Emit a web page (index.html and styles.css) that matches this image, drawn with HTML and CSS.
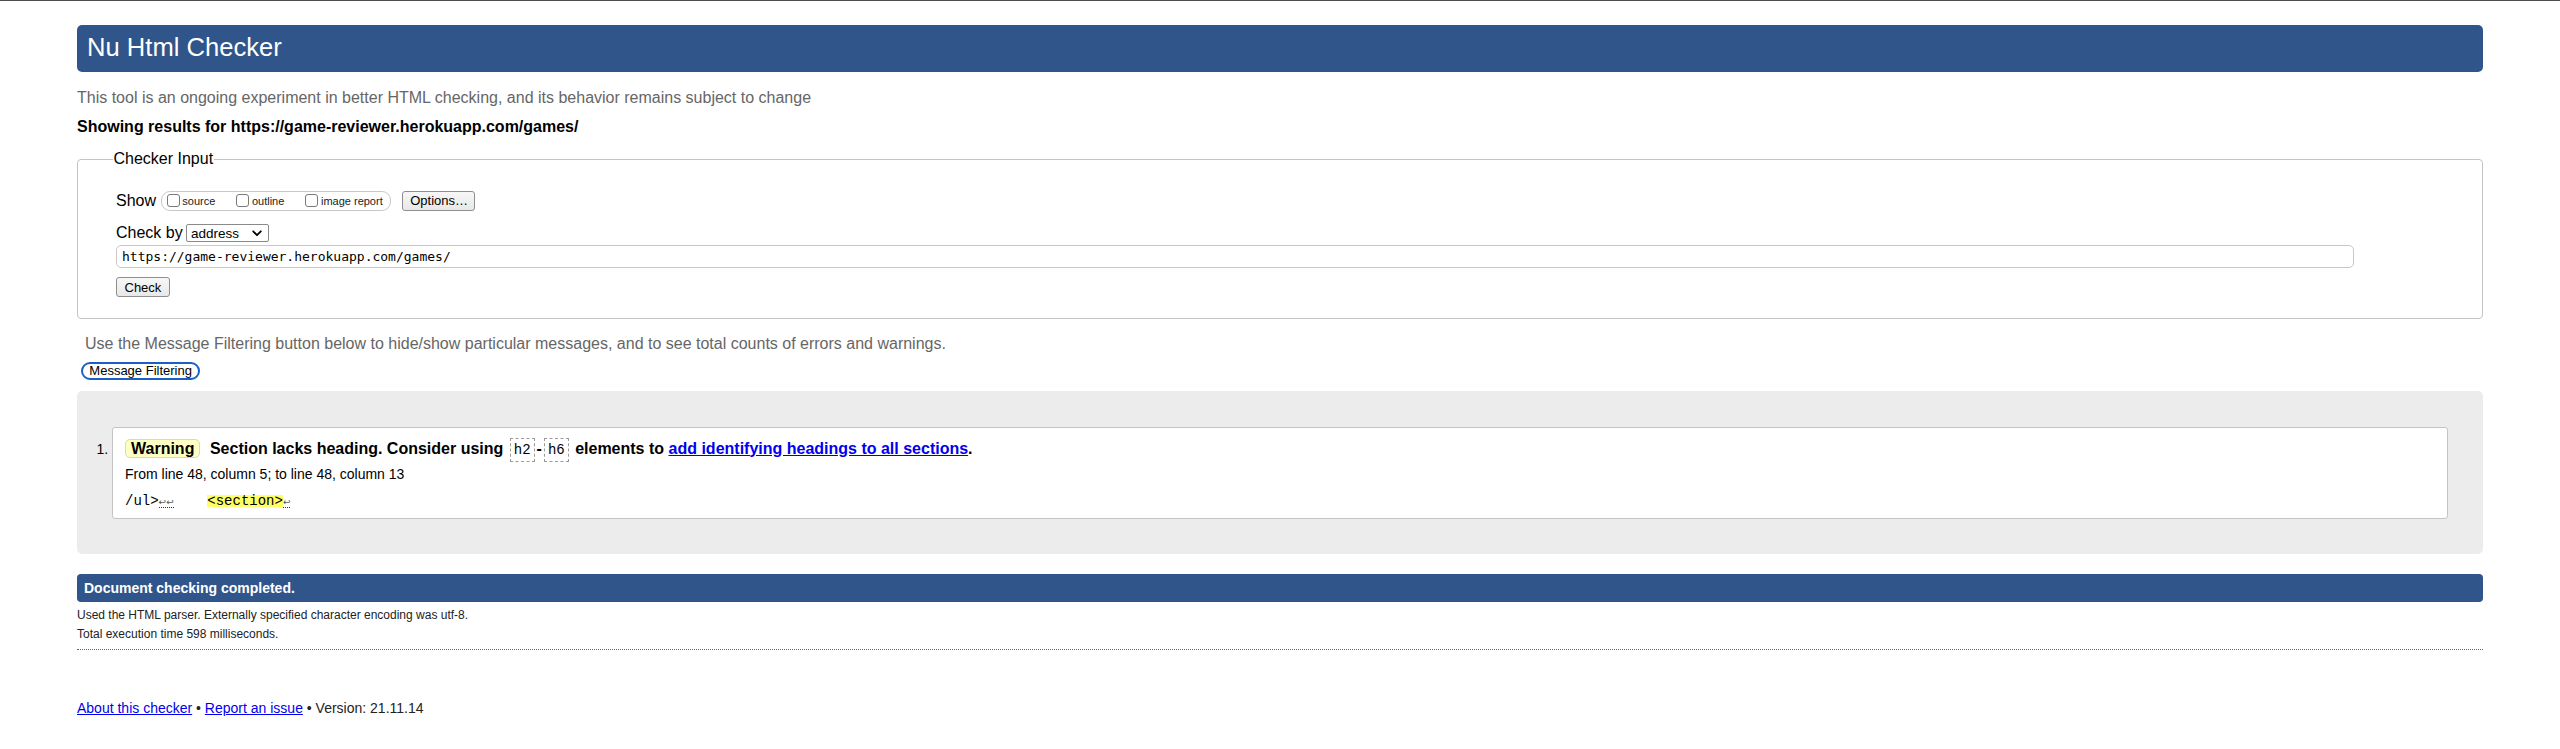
FILE: index.html
```html
<!DOCTYPE html>
<html lang="en">
<head>
<meta charset="utf-8">
<title>Showing results for https://game-reviewer.herokuapp.com/games/ - Nu Html Checker</title>
<link rel="stylesheet" href="styles.css">
</head>
<body>
<h1 class="title">Nu Html Checker</h1>
<p class="intro">This tool is an ongoing experiment in better HTML checking, and its behavior remains subject to change</p>
<p class="showing">Showing results for https://game-reviewer.herokuapp.com/games/</p>
<form class="checker-form">
  <fieldset class="input-set">
    <legend class="input-legend">Checker Input</legend>
    <div class="row row-show">
      <span class="row-label">Show</span>
      <span class="opts">
        <label class="opt"><input type="checkbox" class="cb"><span>source</span></label>
        <label class="opt"><input type="checkbox" class="cb"><span>outline</span></label>
        <label class="opt"><input type="checkbox" class="cb"><span>image report</span></label>
      </span>
      <button type="button" class="btn btn-options">Options…</button>
    </div>
    <div class="row row-by">
      <span class="row-label">Check by</span>
      <select class="by-select"><option>address</option></select>
    </div>
    <div class="row row-url">
      <input class="url" type="text" value="https://game-reviewer.herokuapp.com/games/">
    </div>
    <div class="row row-submit">
      <button type="button" class="btn btn-check">Check</button>
    </div>
  </fieldset>
</form>
<p class="filter-note">Use the Message Filtering button below to hide/show particular messages, and to see total counts of errors and warnings.</p>
<button type="button" class="filter-btn">Message Filtering</button>
<div class="results">
  <ol class="msg-list">
    <li class="msg">
      <p class="msg-title"><strong class="badge">Warning</strong><span class="msg-text">Section lacks heading. Consider using <code class="kw">h2</code>-<code class="kw">h6</code> elements to <a href="#" class="msg-link">add identifying headings to all sections</a>.</span></p>
      <p class="msg-loc">From line 48, column 5; to line 48, column 13</p>
      <p class="msg-extract"><code class="extract">/ul&gt;<span class="nl">↩↩</span>    <mark class="hl">&lt;section&gt;</mark><span class="nl">↩</span></code></p>
    </li>
  </ol>
</div>
<p class="done">Document checking completed.</p>
<p class="meta meta-first">Used the HTML parser. Externally specified character encoding was utf-8.</p>
<p class="meta">Total execution time 598 milliseconds.</p>
<hr class="sep">
<p class="footer"><a href="#" class="foot-link">About this checker</a> • <a href="#" class="foot-link">Report an issue</a> • Version: 21.11.14</p>
</body>
</html>
```

FILE: styles.css
```css
html, body {
  background: #ffffff;
}
body {
  margin: 0;
  padding: 0 77px;
  border-top: 1px solid #4d4d4d;
  font-family: "Liberation Sans", Arial, Helvetica, sans-serif;
  font-size: 16px;
  color: #000;
}
.title {
  margin: 24px 0 0;
  padding: 8px 10px 10px;
  line-height: 29px;
  font-size: 25.6px;
  font-weight: normal;
  color: #fff;
  background: #30558a;
  border-radius: 5px;
}
.intro {
  margin: 17px 0 0;
  line-height: 18px;
  color: #666;
}
.showing {
  margin: 11px 0 0;
  line-height: 18px;
  font-weight: bold;
}
.checker-form {
  margin: 14px 0 0;
}
.input-set {
  margin: 0;
  padding: 22.5px 20px 21px 38px;
  border: 1px solid #c4c4c4;
  border-radius: 4px;
}
.input-legend {
  margin-left: -3.5px;
  padding: 0 1px;
  line-height: 18px;
}
.row {
  display: flex;
  align-items: center;
}
.row-show { height: 20.5px; }
.row-by { height: 18px; margin-top: 13px; }
.row-url { height: 23px; margin-top: 3px; }
.row-submit { height: 20px; margin-top: 9px; }
.row-label {
  line-height: 18px;
}
.opts {
  display: inline-flex;
  align-items: center;
  box-sizing: border-box;
  height: 19.5px;
  margin-left: 5px;
  padding: 0 7px 0 4.7px;
  border: 1px solid #c8c8c8;
  border-radius: 9px;
}
.opt {
  display: inline-flex;
  align-items: center;
  font-size: 11px;
  color: #222;
  margin-right: 21px;
}
.opt:last-child { margin-right: 0; }
.cb {
  appearance: none;
  -webkit-appearance: none;
  box-sizing: border-box;
  width: 13px;
  height: 13px;
  margin: 0 2.6px 0 0;
  border: 1px solid #7a7a7a;
  border-radius: 3px;
  background: #fff;
}
.btn {
  box-sizing: border-box;
  height: 20px;
  padding: 0 7.5px;
  font-family: "Liberation Sans", Arial, sans-serif;
  font-size: 13px;
  color: #000;
  background: linear-gradient(#f7f7f7, #e8e8e8);
  border: 1px solid #8e8e8e;
  border-radius: 3px;
}
.btn-options {
  margin-left: 11px;
  width: 73.5px;
}
.btn-check {
  width: 53.7px;
}
.by-select {
  appearance: none;
  -webkit-appearance: none;
  box-sizing: border-box;
  width: 83px;
  height: 18px;
  margin-left: 3.3px;
  padding: 0 0 0 4px;
  font-family: "Liberation Sans", Arial, sans-serif;
  font-size: 13.5px;
  color: #000;
  border: 1px solid #8a8a8a;
  border-radius: 2px;
  background: #fff url("data:image/svg+xml;utf8,<svg xmlns='http://www.w3.org/2000/svg' width='10' height='7' viewBox='0 0 10 7'><path d='M1.2 1.3 L5 5.2 L8.8 1.3' fill='none' stroke='black' stroke-width='1.8' stroke-linecap='round' stroke-linejoin='round'/></svg>") no-repeat right 6px center;
}
.url {
  box-sizing: border-box;
  width: 2238px;
  height: 23.3px;
  margin: 0;
  padding: 0 5px;
  font-family: "DejaVu Sans Mono", "Liberation Mono", monospace;
  font-size: 13px;
  color: #000;
  border: 1px solid #c8c8c8;
  border-radius: 5px;
  background: #fff;
}
.filter-note {
  margin: 15.5px 0 0;
  padding-left: 8px;
  line-height: 18px;
  color: #666;
}
.filter-btn {
  display: block;
  box-sizing: border-box;
  height: 18.5px;
  width: 118.5px;
  margin: 9px 0 0 4.4px;
  padding: 0;
  font-family: "Liberation Sans", Arial, sans-serif;
  font-size: 13px;
  line-height: 14px;
  color: #000;
  background: #fff;
  border: 2px solid #1a5fc8;
  border-radius: 9px;
}
.results {
  margin-top: 11px;
  background: #ececec;
  border-radius: 5px;
}
.msg-list {
  margin: 0;
  padding: 35.5px 35px 35px;
}
.msg {
  padding: 0 12px 8px;
  font-size: 14px;
  background: #fff;
  border: 1px solid #c4c4c4;
  border-radius: 3px;
}
.msg-title {
  margin: 0;
  padding-top: 11px;
  height: 20px;
  line-height: 20px;
  font-size: 16px;
  font-weight: bold;
}
.badge {
  margin-right: 9.5px;
  padding: 0 5px;
  background: #ffffc4;
  border: 1px solid #dcdca6;
  border-radius: 5px;
}
.kw {
  margin: 0 2px;
  padding: 3px 3px;
  font-family: "Liberation Mono", "DejaVu Sans Mono", monospace;
  font-size: 14px;
  font-weight: normal;
  line-height: 1;
  border: 1px dashed #9a9a9a;
}
.msg-link {
  color: #0000ee;
  text-decoration: underline;
}
.msg-loc {
  margin: 6px 0 0;
  height: 18px;
  line-height: 18px;
}
.msg-extract {
  margin: 9px 0 0;
  height: 18px;
  line-height: 18px;
  font-family: "Liberation Mono", "DejaVu Sans Mono", monospace;
}
.extract {
  font-family: "Liberation Mono", "DejaVu Sans Mono", monospace;
  font-size: 14px;
  white-space: pre;
}
.nl {
  font-family: "DejaVu Sans", sans-serif;
  font-size: 9px;
  line-height: 1;
  color: #555;
  border-bottom: 1px dotted #333;
}
.hl {
  display: inline-block;
  line-height: 12px;
  background: #ffff66;
  color: #000;
}
.done {
  margin: 20.5px 0 0;
  padding: 6px 7px;
  line-height: 16px;
  font-size: 14px;
  font-weight: bold;
  color: #fff;
  background: #30558a;
  border-radius: 4px;
}
.meta {
  margin: 0;
  line-height: 19px;
  font-size: 12px;
  color: #222;
}
.meta-first {
  margin-top: 4px;
}
.sep {
  height: 0;
  margin: 5px 0 0;
  border: 0;
  border-top: 1px dotted #666;
}
.footer {
  margin: 48.5px 0 0;
  line-height: 18px;
  font-size: 14px;
  color: #222;
}
.foot-link {
  color: #0000ee;
  text-decoration: underline;
}
```
